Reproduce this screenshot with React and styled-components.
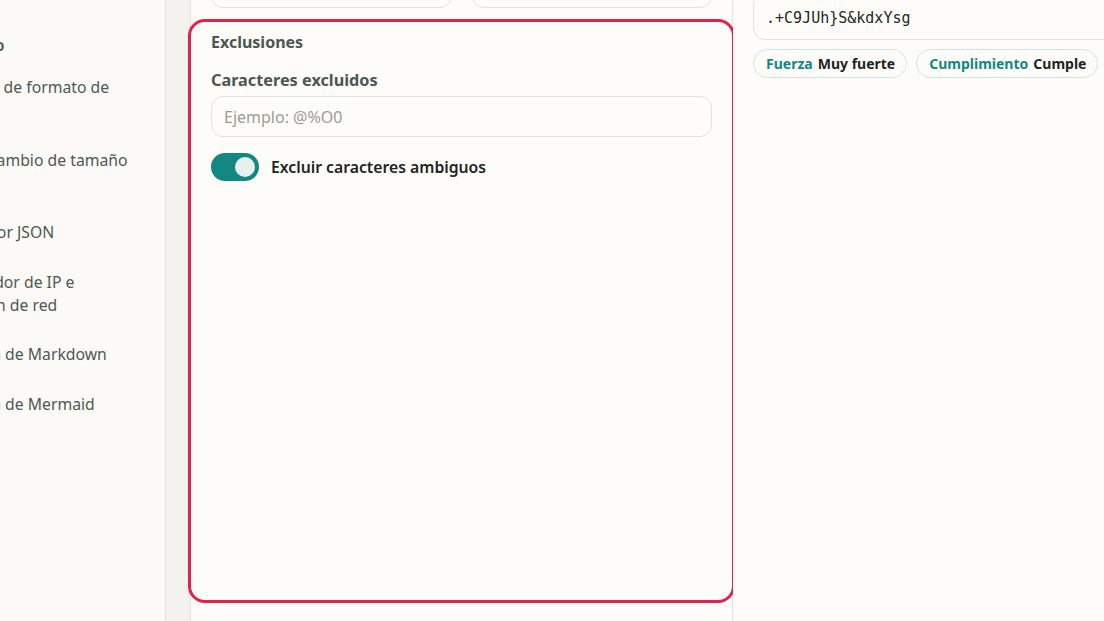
import React from "react";
import styled, { createGlobalStyle } from "styled-components";

const GlobalStyle = createGlobalStyle`
  html, body {
    margin: 0;
    padding: 0;
    background: #fdfcf8;
    overflow: hidden;
  }
  body {
    font-family: "Noto Sans", "Liberation Sans", sans-serif;
    color: #1f2623;
  }
  * { box-sizing: border-box; }
`;

const Page = styled.div`
  display: flex;
  height: 621px;
  margin-left: -102px;
  width: 1260px;
`;

const Sidebar = styled.nav`
  width: 268px;
  flex: none;
  background: #fbfaf6;
  border-right: 1px solid #e4e1d8;
  padding-top: 34px;
  overflow: hidden;
`;

const GroupTitle = styled.div`
  padding-left: 27px;
  font-size: 15.75px;
  font-weight: 600;
  line-height: 22px;
  color: #4b5651;
  white-space: nowrap;
  margin-bottom: 7px;
`;

const NavItem = styled.a`
  display: block;
  padding: 13.25px 12px 13.25px 18px;
  font-size: 15.75px;
  line-height: 23px;
  color: #4e5853;
  text-decoration: none;
`;

const NavLine = styled.span`
  display: block;
  white-space: nowrap;
`;

const Main = styled.main`
  flex: 1;
  display: flex;
  background: #f3f2ee;
  padding-left: 24px;
`;

const Column = styled.section`
  width: 543px;
  flex: none;
  background: #fdfcf8;
  border-left: 1px solid #e4e1d8;
  border-right: 1px solid #e4e1d8;
  display: flex;
  flex-direction: column;
`;

const FieldGrid = styled.div`
  display: grid;
  grid-template-columns: 1fr 1fr;
  gap: 20px;
  padding: 0 20px;
  margin-top: -33px;
  margin-bottom: 14px;
`;

const TextInput = styled.input`
  display: block;
  width: 100%;
  height: 41px;
  border: 1px solid #e3e0d5;
  border-radius: 12px;
  background: #fdfcf8;
  padding: 0 12px;
  font-family: inherit;
  font-size: 16px;
  color: #1f2623;
  outline: none;
  &::placeholder {
    color: #9b9c97;
  }
`;

const Card = styled.div`
  height: 578px;
  padding: 10px 20px;
  border-radius: 14px;
  outline: 3px solid #e2214f;
  outline-offset: 0;
  display: flex;
  flex-direction: column;
`;

const CardTitle = styled.h3`
  margin: 0;
  font-size: 16px;
  font-weight: 700;
  line-height: 20px;
  color: #4b5752;
`;

const Field = styled.div`
  margin-top: 17px;
  display: flex;
  flex-direction: column;
  gap: 5px;
`;

const FieldLabel = styled.label`
  font-size: 16.25px;
  font-weight: 700;
  line-height: 22px;
  color: #4b5752;
`;

const ToggleRow = styled.label`
  margin-top: 16px;
  display: flex;
  align-items: center;
  gap: 12px;
  cursor: pointer;
`;

const Track = styled.span`
  position: relative;
  width: 48px;
  height: 28px;
  flex: none;
  border-radius: 14px;
  background: ${(p) => (p.$on ? "#138883" : "#d6d4cc")};
`;

const Knob = styled.span`
  position: absolute;
  top: 4px;
  left: ${(p) => (p.$on ? "24px" : "4px")};
  width: 20px;
  height: 20px;
  border-radius: 50%;
  background: #e6f0ee;
`;

const ToggleText = styled.span`
  font-size: 15.75px;
  font-weight: 600;
  line-height: 22px;
  color: #1e2522;
`;

const Output = styled.aside`
  flex: 1;
  padding: 0 20px;
  background: #fdfcf8;
`;

const ResultBox = styled.div`
  margin-top: -7px;
  height: 47px;
  border: 1px solid #e3e0d5;
  border-radius: 12px;
  padding: 2px 12px 0;
  display: flex;
  align-items: center;
  font-family: "DejaVu Sans Mono", "Liberation Mono", monospace;
  font-size: 15px;
  color: #222826;
`;

const Pills = styled.div`
  margin-top: 9px;
  display: flex;
  gap: 9px;
`;

const Pill = styled.span`
  height: 29px;
  display: inline-flex;
  align-items: center;
  gap: 5px;
  padding: 0 11px 0 12px;
  border: 1px solid #cfe5e1;
  border-radius: 999px;
  font-size: 14px;
  font-weight: 700;
  white-space: nowrap;
`;

const PillKey = styled.span`
  color: #138883;
`;

const PillValue = styled.span`
  color: #1e2522;
`;

const navItems = [
  ["Conversión de formato de", "imagen"],
  ["Recorte y cambio de tamaño", "de imagen"],
  ["Formateador JSON"],
  ["Comprobador de IP e", "información de red"],
  ["Vista previa de Markdown"],
  ["Vista previa de Mermaid"],
];

export default function App() {
  const [ambiguous, setAmbiguous] = React.useState(true);
  return (
    <>
      <GlobalStyle />
      <Page>
        <Sidebar>
          <GroupTitle>Desarrollo</GroupTitle>
          {navItems.map((lines) => (
            <NavItem key={lines[0]} href="#">
              {lines.map((l) => (
                <NavLine key={l}>{l}</NavLine>
              ))}
            </NavItem>
          ))}
        </Sidebar>
        <Main>
          <Column>
            <FieldGrid>
              <TextInput defaultValue="" />
              <TextInput defaultValue="" />
            </FieldGrid>
            <Card>
              <CardTitle>Exclusiones</CardTitle>
              <Field>
                <FieldLabel>Caracteres excluidos</FieldLabel>
                <TextInput placeholder="Ejemplo: @%O0" />
              </Field>
              <ToggleRow onClick={() => setAmbiguous((v) => !v)}>
                <Track $on={ambiguous}>
                  <Knob $on={ambiguous} />
                </Track>
                <ToggleText>Excluir caracteres ambiguos</ToggleText>
              </ToggleRow>
            </Card>
          </Column>
          <Output>
            <ResultBox>.+C9JUh}S&amp;kdxYsg</ResultBox>
            <Pills>
              <Pill>
                <PillKey>Fuerza</PillKey>
                <PillValue>Muy fuerte</PillValue>
              </Pill>
              <Pill>
                <PillKey>Cumplimiento</PillKey>
                <PillValue>Cumple</PillValue>
              </Pill>
            </Pills>
          </Output>
        </Main>
      </Page>
    </>
  );
}
